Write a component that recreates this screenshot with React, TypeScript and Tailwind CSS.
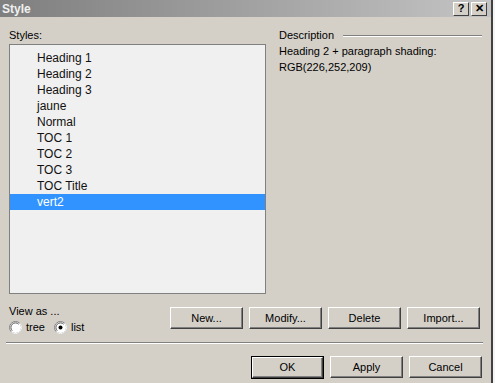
import React from "react";

const items = ["Heading 1", "Heading 2", "Heading 3", "jaune", "Normal", "TOC 1", "TOC 2", "TOC 3", "TOC Title", "vert2"];

function Btn({ label, def }: { label: string; def?: boolean }) {
  const inner = (
    <div className="flex h-full w-full items-center justify-center border-t border-l border-t-white border-l-white border-r border-b border-r-[#404040] border-b-[#404040] bg-[#d4d0c8] shadow-[inset_-1px_-1px_0_#808080] text-[11px] text-black">
      {label}
    </div>
  );
  if (def) {
    return <div className="h-[23px] w-[73px] border border-black">{inner}</div>;
  }
  return <div className="h-[22px] w-[73px]">{inner}</div>;
}

function Radio({ checked }: { checked?: boolean }) {
  return (
    <svg width="13" height="13" viewBox="0 0 13 13">
      <circle cx="6.5" cy="6.5" r="6" fill="#ffffff" stroke="#808080" strokeWidth="1" />
      <path d="M2.2 10.8 A6 6 0 0 0 10.8 2.2" fill="none" stroke="#ffffff" strokeWidth="1" />
      <circle cx="6.5" cy="6.5" r="4.6" fill="#ffffff" stroke="#404040" strokeWidth="0.8" strokeDasharray="14 20" transform="rotate(135 6.5 6.5)" />
      {checked && <circle cx="6.5" cy="6.5" r="2" fill="#000" />}
    </svg>
  );
}

export default function App() {
  return (
    <div
      className="flex h-[383px] w-[495px] overflow-hidden bg-[#f4f4f4]"
      style={{ fontFamily: '"Liberation Sans", Arial, sans-serif' }}
    >
      <div className="flex h-full w-[493px] flex-col border-r-2 border-r-[#404040] bg-[#d4d0c8]">
        {/* Title bar */}
        <div className="flex h-[17px] items-center justify-between bg-gradient-to-r from-[#7f7f7f] to-[#c4c4c4] pl-[2px] pr-[4px]">
          <span className="text-[12px] font-bold leading-none text-[#f0f0f0]">Style</span>
          <div className="flex gap-[2px]">
            <div className="flex h-[14px] w-[16px] items-center justify-center border border-t-white border-l-white border-r-[#404040] border-b-[#404040] bg-[#d4d0c8] text-[11px] font-bold leading-none text-black">?</div>
            <div className="flex h-[14px] w-[16px] items-center justify-center border border-t-white border-l-white border-r-[#404040] border-b-[#404040] bg-[#d4d0c8] text-[11px] font-bold leading-none text-black">✕</div>
          </div>
        </div>

        {/* Main */}
        <div className="flex pt-[11px]">
          <div className="ml-[9px] flex w-[257px] flex-col">
            <div className="h-[15px] text-[11px] leading-[15px] text-black">Styles:</div>
            <div className="mt-[1px] h-[250px] border border-[#808080] bg-[#f0f0f0] pt-[5px]">
              {items.map((it) => (
                <div
                  key={it}
                  className={
                    "h-[16px] pl-[27px] text-[12px] leading-[16px] " +
                    (it === "vert2" ? "bg-[#3093ff] text-white" : "text-[#111]")
                  }
                >
                  {it}
                </div>
              ))}
            </div>
          </div>
          <div className="ml-[13px] flex flex-1 flex-col pr-[9px]">
            <div className="flex h-[15px] items-center">
              <span className="text-[11px] text-black">Description</span>
              <div className="ml-[9px] flex-1 border-t border-b border-t-[#808080] border-b-white" />
            </div>
            <div className="text-[11px] leading-[16px] text-black">
              Heading 2 + paragraph shading:
              <br />
              RGB(226,252,209)
            </div>
          </div>
        </div>

        {/* Bottom row 1 */}
        <div className="mt-[10px] flex h-[30px] items-start">
          <div className="ml-[9px] flex w-[150px] flex-col">
            <div className="h-[14px] text-[11px] leading-[14px] text-black">View as ...</div>
            <div className="mt-[3px] flex h-[13px] items-center text-[11px] leading-none text-black">
              <Radio />
              <span className="ml-[4px]">tree</span>
              <span className="ml-[9px]" />
              <Radio checked />
              <span className="ml-[4px]">list</span>
            </div>
          </div>
          <div className="ml-[11px] mt-[3px] flex gap-[6px]">
            <Btn label="New..." />
            <Btn label="Modify..." />
            <Btn label="Delete" />
            <Btn label="Import..." />
          </div>
        </div>

        {/* Separator */}
        <div className="ml-[6px] mr-[8px] mt-[8px] border-t border-b border-t-[#808080] border-b-white" />

        {/* Bottom row 2 */}
        <div className="mt-[12px] flex justify-end gap-[6px] pr-[9px]">
          <Btn label="OK" def />
          <Btn label="Apply" />
          <Btn label="Cancel" />
        </div>
      </div>
    </div>
  );
}
